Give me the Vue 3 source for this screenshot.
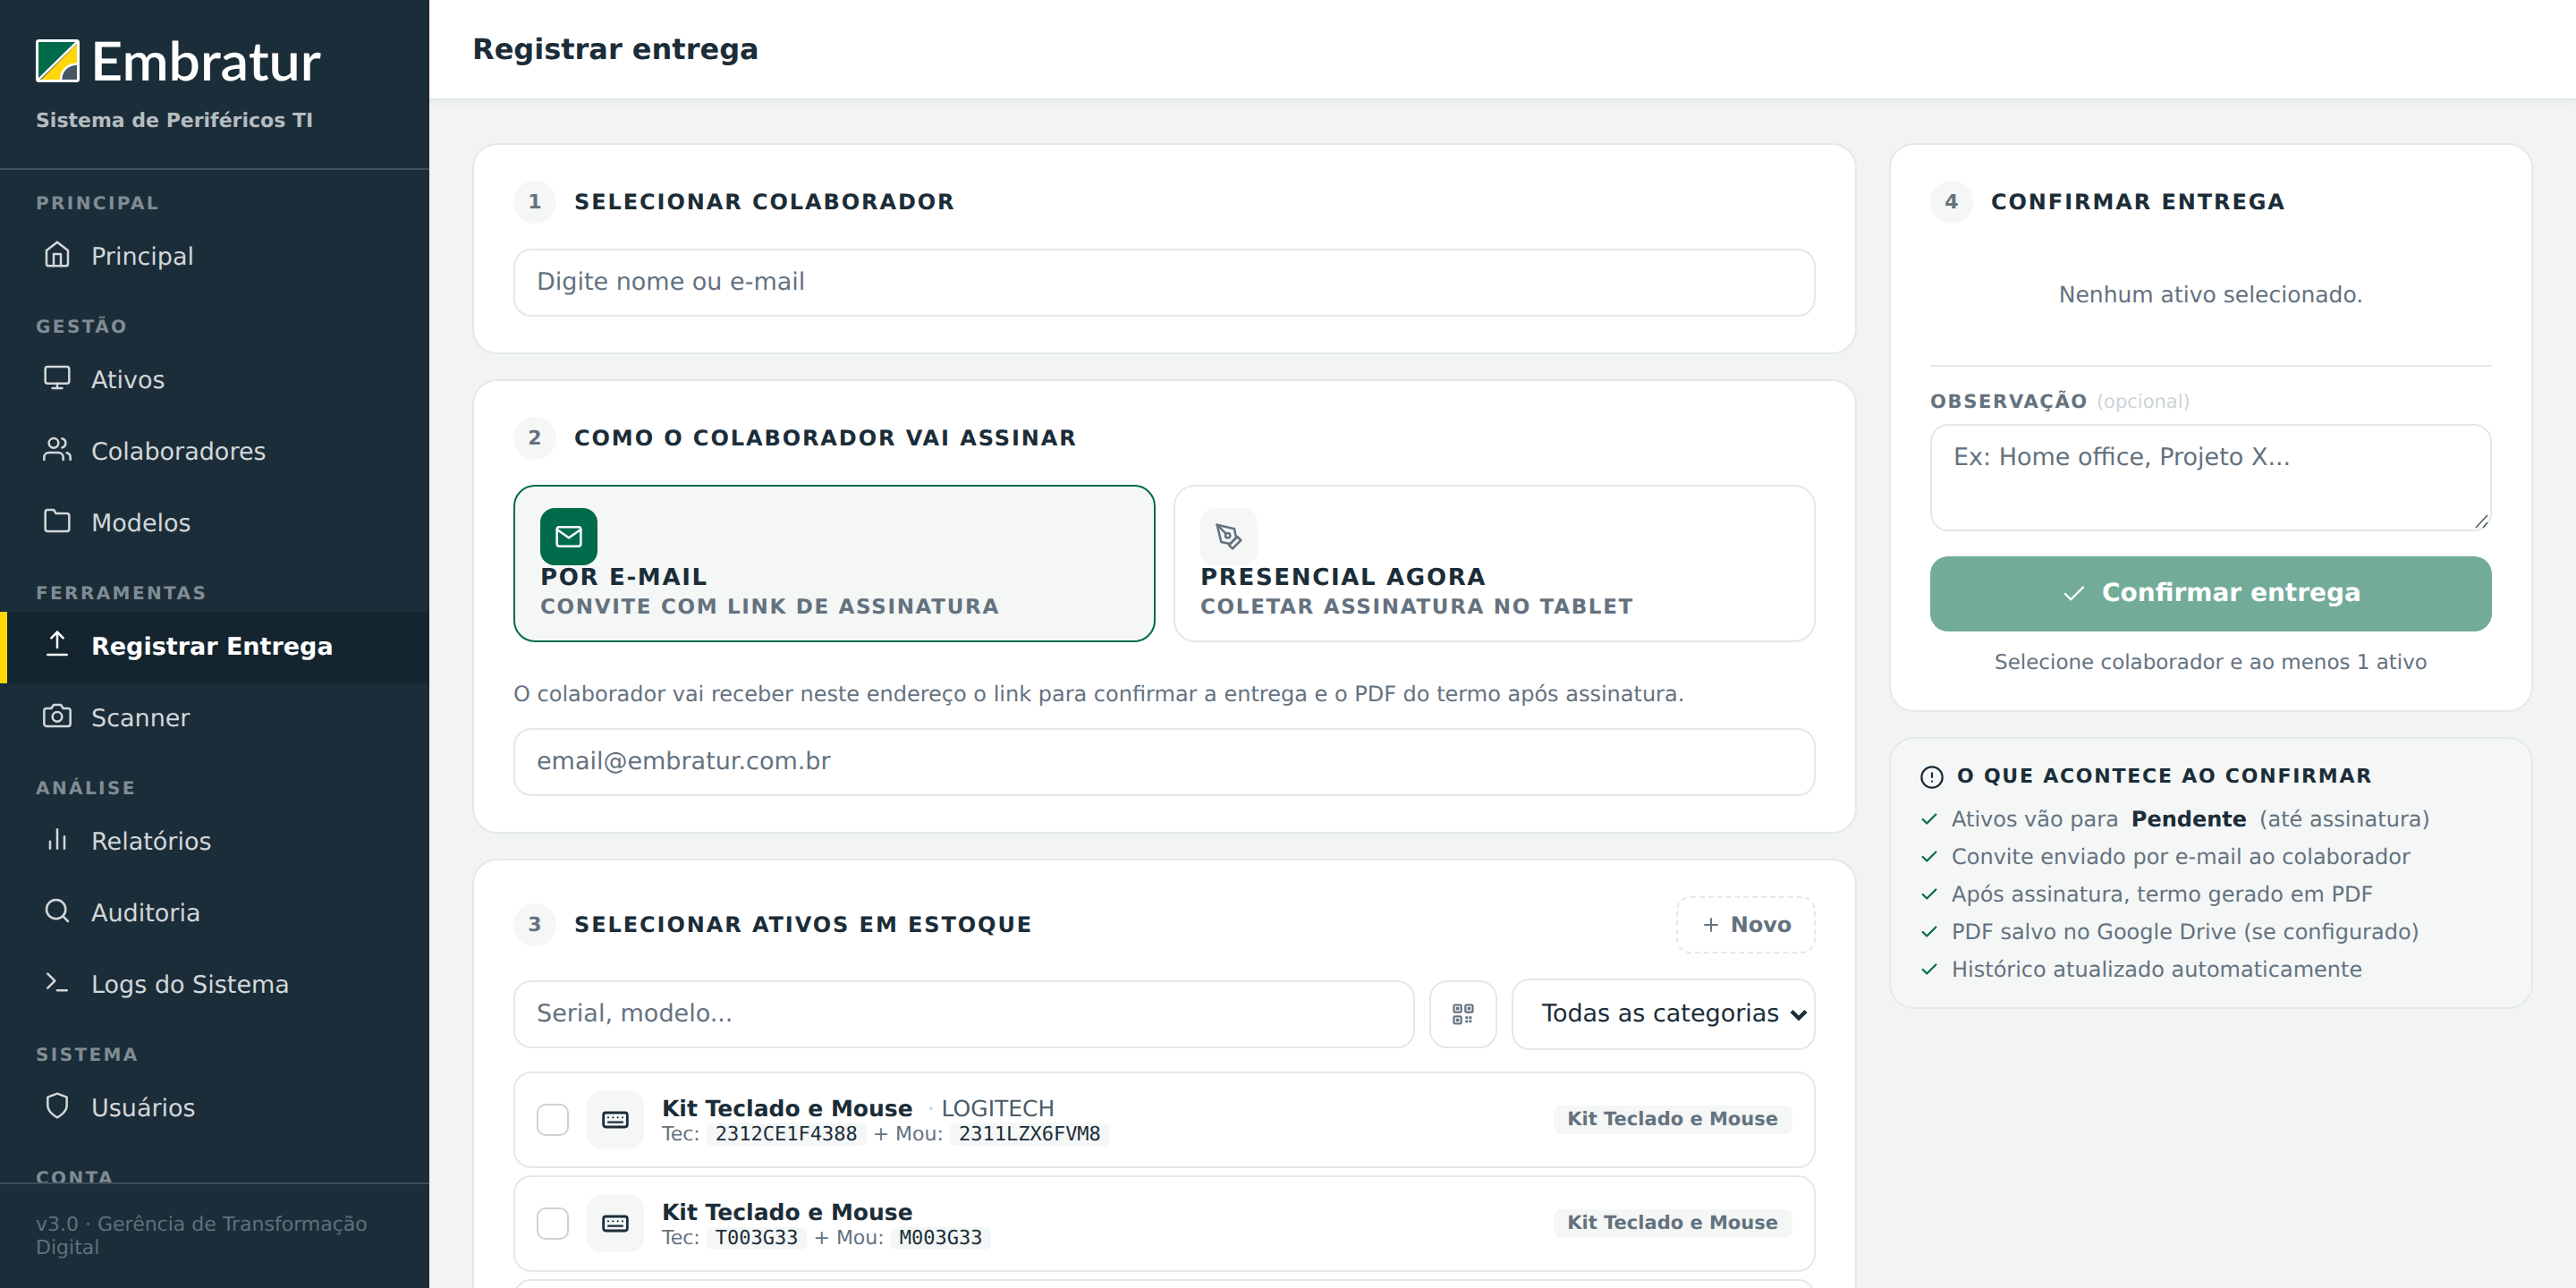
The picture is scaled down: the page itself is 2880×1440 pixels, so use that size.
<!-- App.vue -->
<template>
    <div class="layout">
        <aside class="sidebar">
            <div class="brand">
                <svg class="brand-logo" width="340" height="56" viewBox="0 0 340 56">
                    <rect x="1.5" y="1.5" width="46" height="45" rx="2" fill="#1b2d38" />
                    <path d="M3 3h42L3 43z" fill="#006b4b" />
                    <path d="M46 5v22c-11 1-17 8-18 19H5z" fill="#ffd60a" />
                    <path d="M46 28v18H28.500c0-11 7-17 17.500-18z" fill="#455764" />
                    <path d="M3 45L46 3M28 46c0-11 7-18 18-18.500" fill="none" stroke="#fff" stroke-width="2.500" />
                    <rect x="1.500" y="1.500" width="46" height="45" rx="2" fill="none" stroke="#fff" stroke-width="3" />
                    <text class="brand-name" x="61" y="46" textLength="258" lengthAdjust="spacingAndGlyphs">Embratur</text>
                </svg>
                <div class="brand-sub">Sistema de Periféricos TI</div>
            </div>
            <nav class="nav">
                <template v-for="section in sections" :key="section.label">
                    <div class="nav-label">{{ section.label }}</div>
                    <a v-for="item in section.items" :key="item.label" class="nav-item" :class="{ active: item.active }">
                        <span class="nav-icon">
                            <svg class="icon" width="32" height="32" viewBox="0 0 24 24"><path v-for="d in icons[item.icon]" :key="d" :d="d" /></svg>
                        </span>
                        <span>{{ item.label }}</span>
                    </a>
                </template>
            </nav>
            <div class="sidebar-footer">v3.0 · Gerência de Transformação Digital</div>
        </aside>

        <div class="main">
            <header class="topbar">
                <h1>Registrar entrega</h1>
            </header>
            <div class="content">
                <div class="col">
                    <!-- Passo 1 -->
                    <section class="card">
                        <div class="card-head">
                            <span class="step">1</span>
                            <h2>SELECIONAR COLABORADOR</h2>
                        </div>
                        <input v-model="colaborador" class="field" type="text" placeholder="Digite nome ou e-mail">
                    </section>

                    <!-- Passo 2 -->
                    <section class="card">
                        <div class="card-head">
                            <span class="step">2</span>
                            <h2>COMO O COLABORADOR VAI ASSINAR</h2>
                        </div>
                        <div class="modes">
                            <div
                                v-for="m in modes"
                                :key="m.id"
                                class="mode"
                                :class="{ selected: mode === m.id }"
                                @click="mode = m.id"
                            >
                                <span class="mode-icon">
                                    <svg class="icon" width="32" height="32" viewBox="0 0 24 24"><path v-for="d in icons[m.icon]" :key="d" :d="d" /></svg>
                                </span>
                                <div class="mode-title">{{ m.title }}</div>
                                <div class="mode-sub">{{ m.sub }}</div>
                            </div>
                        </div>
                        <p class="mode-help">O colaborador vai receber neste endereço o link para confirmar a entrega e o PDF do termo após assinatura.</p>
                        <input v-model="email" class="field" type="email" placeholder="email@embratur.com.br">
                    </section>

                    <!-- Passo 3 -->
                    <section class="card">
                        <div class="card-head">
                            <span class="step">3</span>
                            <h2>SELECIONAR ATIVOS EM ESTOQUE</h2>
                            <button class="btn-new" type="button">
                                <svg class="icon" width="24" height="24" viewBox="0 0 24 24"><path d="M12 5v14M5 12h14" /></svg>
                                Novo
                            </button>
                        </div>
                        <div class="filters">
                            <input v-model="busca" class="field" type="text" placeholder="Serial, modelo...">
                            <button class="btn-qr" type="button">
                                <svg class="icon" width="28" height="28" viewBox="0 0 24 24">
                                    <rect x="3" y="3" width="7" height="7" rx="1" />
                                    <rect x="14" y="3" width="7" height="7" rx="1" />
                                    <rect x="3" y="14" width="7" height="7" rx="1" />
                                    <path class="solid" d="M5 5h3v3H5zM16 5h3v3h-3zM5 16h3v3H5zM14 14h2.500v2.500H14zM17.500 14H20v2.500h-2.500zM14 17.500h2.500V20H14zM17.500 17.500H20V20h-2.500z" />
                                </svg>
                            </button>
                            <div class="select">
                                <span>Todas as categorias</span>
                                <svg width="20" height="14" viewBox="0 0 20 14"><path d="M2 2.500l8 8 8-8" /></svg>
                            </div>
                        </div>
                        <div class="assets">
                            <div v-for="(a, i) in ativos" :key="i" class="asset">
                                <span class="check-box"></span>
                                <span class="asset-icon">
                                    <svg class="icon keyboard" width="32" height="32" viewBox="0 0 24 24">
                                        <rect x="2" y="6" width="20" height="12" rx="2" />
                                        <path d="M6 10h.01M10 10h.01M14 10h.01M18 10h.01M6 14h12" />
                                    </svg>
                                </span>
                                <div class="asset-info">
                                    <div class="asset-name">
                                        <strong>{{ a.nome }}</strong>
                                        <span v-if="a.marca" class="asset-brand"><i>·</i> {{ a.marca }}</span>
                                    </div>
                                    <div class="asset-serial">Tec: <code>{{ a.tec }}</code> + Mou: <code>{{ a.mou }}</code></div>
                                </div>
                                <span class="badge">{{ a.nome }}</span>
                            </div>
                        </div>
                    </section>
                </div>

                <div class="col">
                    <!-- Passo 4 -->
                    <section class="card">
                        <div class="card-head">
                            <span class="step">4</span>
                            <h2>CONFIRMAR ENTREGA</h2>
                        </div>
                        <div class="empty">Nenhum ativo selecionado.</div>
                        <div class="obs-label">OBSERVAÇÃO <span>(opcional)</span></div>
                        <div class="obs">
                            <textarea v-model="observacao" class="field" placeholder="Ex: Home office, Projeto X..."></textarea>
                            <svg class="grip" width="16" height="16" viewBox="0 0 16 16"><path d="M1 15L14 1M9 15l5-6" /></svg>
                        </div>
                        <button class="btn-confirm" type="button">
                            <svg class="icon" width="30" height="30" viewBox="0 0 24 24"><path d="M20 6L9 17l-5-5" /></svg>
                            Confirmar entrega
                        </button>
                        <div class="hint">Selecione colaborador e ao menos 1 ativo</div>
                    </section>

                    <section class="info">
                        <div class="info-title">
                            <svg class="icon" width="28" height="28" viewBox="0 0 24 24">
                                <circle cx="12" cy="12" r="10" />
                                <path d="M12 8v4M12 16h.01" />
                            </svg>
                            O QUE ACONTECE AO CONFIRMAR
                        </div>
                        <div v-for="(parts, i) in passos" :key="i" class="info-row">
                            <svg class="icon" width="22" height="22" viewBox="0 0 24 24"><path d="M20 6L9 17l-5-5" /></svg>
                            <component :is="j === 1 ? 'strong' : 'span'" v-for="(p, j) in parts" :key="j">{{ p }}</component>
                        </div>
                    </section>
                </div>
            </div>
        </div>
    </div>
</template>

<script setup>
import { ref } from 'vue';

// Campos do formulário
const colaborador = ref('');
const email = ref('');
const busca = ref('');
const observacao = ref('');
const mode = ref('email');

// Ícones (traços em viewBox 24x24)
const icons = {
    home: ['M3 9l9-7 9 7v11a2 2 0 0 1-2 2H5a2 2 0 0 1-2-2z', 'M9 22V12h6v10'],
    monitor: ['M4 3h16a2 2 0 0 1 2 2v10a2 2 0 0 1-2 2H4a2 2 0 0 1-2-2V5a2 2 0 0 1 2-2z', 'M8 21h8', 'M12 17v4'],
    users: ['M17 21v-2a4 4 0 0 0-4-4H5a4 4 0 0 0-4 4v2', 'M13 7a4 4 0 1 1-8 0 4 4 0 0 1 8 0z', 'M23 21v-2a4 4 0 0 0-3-3.870', 'M16 3.130a4 4 0 0 1 0 7.750'],
    folder: ['M22 19a2 2 0 0 1-2 2H4a2 2 0 0 1-2-2V5a2 2 0 0 1 2-2h5l2 3h9a2 2 0 0 1 2 2z'],
    upload: ['M12 15V2', 'M7 7l5-5 5 5', 'M4 21h16'],
    camera: ['M23 19a2 2 0 0 1-2 2H3a2 2 0 0 1-2-2V8a2 2 0 0 1 2-2h4l2-3h6l2 3h4a2 2 0 0 1 2 2z', 'M16 13a4 4 0 1 1-8 0 4 4 0 0 1 8 0z'],
    chart: ['M18 20V10', 'M12 20V4', 'M6 20v-6'],
    search: ['M19 11a8 8 0 1 1-16 0 8 8 0 0 1 16 0z', 'M21 21l-4.350-4.350'],
    terminal: ['M4 17l6-6-6-6', 'M12 19h8'],
    shield: ['M12 22s8-4 8-10V5l-8-3-8 3v7c0 6 8 10 8 10z'],
    mail: ['M4 4h16a2 2 0 0 1 2 2v12a2 2 0 0 1-2 2H4a2 2 0 0 1-2-2V6a2 2 0 0 1 2-2z', 'M22 6l-10 7L2 6'],
    pen: ['M12 19l7-7 3 3-7 7-3-3z', 'M18 13l-1.500-7.500L2 2l3.500 14.500L13 18l5-5z', 'M2 2l7.586 7.586', 'M13 11a2 2 0 1 1-4 0 2 2 0 0 1 4 0z']
};

// Menu lateral
const sections = [
    { label: 'PRINCIPAL', items: [{ label: 'Principal', icon: 'home' }] },
    {
        label: 'GESTÃO',
        items: [
            { label: 'Ativos', icon: 'monitor' },
            { label: 'Colaboradores', icon: 'users' },
            { label: 'Modelos', icon: 'folder' }
        ]
    },
    {
        label: 'FERRAMENTAS',
        items: [
            { label: 'Registrar Entrega', icon: 'upload', active: true },
            { label: 'Scanner', icon: 'camera' }
        ]
    },
    {
        label: 'ANÁLISE',
        items: [
            { label: 'Relatórios', icon: 'chart' },
            { label: 'Auditoria', icon: 'search' },
            { label: 'Logs do Sistema', icon: 'terminal' }
        ]
    },
    { label: 'SISTEMA', items: [{ label: 'Usuários', icon: 'shield' }] },
    { label: 'CONTA', items: [] }
];

// Formas de assinatura
const modes = [
    { id: 'email', icon: 'mail', title: 'POR E-MAIL', sub: 'CONVITE COM LINK DE ASSINATURA' },
    { id: 'presencial', icon: 'pen', title: 'PRESENCIAL AGORA', sub: 'COLETAR ASSINATURA NO TABLET' }
];

// Ativos em estoque
const ativos = [
    { nome: 'Kit Teclado e Mouse', marca: 'LOGITECH', tec: '2312CE1F4388', mou: '2311LZX6FVM8' },
    { nome: 'Kit Teclado e Mouse', tec: 'T003G33', mou: 'M003G33' },
    { nome: 'Kit Teclado e Mouse', tec: 'T003G34', mou: 'M003G34' }
];

// Cada passo é uma lista de trechos; o segundo trecho sai em destaque
const passos = [
    ['Ativos vão para', 'Pendente', '(até assinatura)'],
    ['Convite enviado por e-mail ao colaborador'],
    ['Após assinatura, termo gerado em PDF'],
    ['PDF salvo no Google Drive (se configurado)'],
    ['Histórico atualizado automaticamente']
];
</script>

<style>
body {
    margin: 0;
    background: #f1f4f3;
}
</style>

<style scoped>
* {
    box-sizing: border-box;
}

.layout {
    display: flex;
    height: 1440px;
    overflow: hidden;
    color: #1b2d38;
    font-family: "DejaVu Sans", sans-serif;
    font-size: 27px;
    text-rendering: geometricPrecision;
}

.icon {
    flex: none;
    fill: none;
    stroke: currentColor;
    stroke-width: 1.9;
    stroke-linecap: round;
    stroke-linejoin: round;
}

/* Menu lateral */
.sidebar {
    display: flex;
    flex-direction: column;
    flex: none;
    width: 480px;
    background: #1b2d38;
}

.brand {
    flex: none;
    height: 190px;
    padding: 44px 40px 0;
    border-bottom: 2px solid #3d4e5b;
}

.brand-logo {
    display: block;
    overflow: visible;
}

.brand-name {
    fill: #fff;
    font-family: Lato, sans-serif;
    font-size: 60px;
    font-weight: 600;
}

.brand-sub {
    margin-top: 22px;
    color: #b5bcc0;
    font-size: 22px;
    font-weight: 700;
    line-height: 28px;
}

.nav {
    flex: 1;
    min-height: 0;
    overflow: hidden;
}

.nav-label {
    height: 58px;
    padding: 26px 40px 0;
    color: #808c95;
    font-size: 20px;
    font-weight: 700;
    letter-spacing: 2.4px;
    line-height: 22px;
}

.nav-item {
    display: flex;
    align-items: center;
    gap: 14px;
    height: 80px;
    padding-left: 32px;
    border-left: 8px solid transparent;
    color: #d2d7d9;
    line-height: 32px;
}

.nav-item.active {
    border-left-color: #ffd60a;
    background: #15252f;
    color: #fff;
    font-weight: 700;
}

.nav-icon {
    display: flex;
    justify-content: center;
    width: 48px;
    padding-bottom: 8px;
}

.sidebar-footer {
    flex: none;
    height: 118px;
    padding: 33px 40px 0;
    border-top: 2px solid #3d4e5b;
    color: #60707d;
    font-size: 22px;
    line-height: 26px;
}

/* Conteúdo */
.main {
    flex: 1;
    min-width: 0;
}

.topbar {
    display: flex;
    align-items: center;
    height: 112px;
    padding: 0 48px;
    border-bottom: 2px solid #e4e9e8;
    background: #fff;
    box-shadow: 0 2px 8px rgba(27, 45, 56, 0.06);
}

h1 {
    margin: 0;
    font-size: 32px;
    line-height: 40px;
}

.content {
    display: grid;
    grid-template-columns: 1548px 720px;
    gap: 36px;
    padding: 48px;
}

.col {
    display: flex;
    flex-direction: column;
    gap: 28px;
}

.card {
    padding: 40px 44px;
    border: 2px solid #e4e9e8;
    border-radius: 28px;
    background: #fff;
}

.card-head {
    display: flex;
    align-items: center;
    gap: 20px;
    margin-bottom: 28px;
}

.step {
    display: flex;
    align-items: center;
    justify-content: center;
    width: 48px;
    height: 48px;
    border-radius: 50%;
    background: #f4f7f6;
    color: #64727f;
    font-size: 22px;
    font-weight: 700;
}

h2 {
    margin: 0;
    font-size: 24px;
    letter-spacing: 1.92px;
    line-height: 30px;
}

.field {
    display: block;
    width: 100%;
    height: 76px;
    padding: 0 24px 2px;
    border: 2px solid #e4e9e8;
    border-radius: 20px;
    outline: none;
    background: #fff;
    color: #1b2d38;
    font-family: inherit;
    font-size: 27px;
    text-rendering: inherit;
}

.field::placeholder {
    color: #64727f;
    opacity: 1;
}

/* Forma de assinatura */
.modes {
    display: grid;
    grid-template-columns: 1fr 1fr;
    gap: 20px;
}

.mode {
    height: 176px;
    padding: 24px 28px;
    border: 2px solid #e4e9e8;
    border-radius: 24px;
    font-weight: 700;
    letter-spacing: 1.68px;
}

.mode.selected {
    border-color: #006b4b;
    background: #f4f7f6;
}

.mode-icon {
    display: flex;
    align-items: center;
    justify-content: center;
    width: 64px;
    height: 64px;
    border-radius: 16px;
    background: #f4f7f6;
    color: #64727f;
}

.mode.selected .mode-icon {
    background: #006b4b;
    color: #fff;
}

.mode-title {
    font-size: 26px;
    line-height: 29px;
}

.mode-sub {
    margin-top: 3px;
    color: #64727f;
    font-size: 23px;
    line-height: 30px;
}

.mode-help {
    margin: 43px 0 23px;
    color: #64727f;
    font-size: 24px;
    line-height: 30px;
}

/* Lista de ativos */
.btn-new {
    display: flex;
    align-items: center;
    justify-content: center;
    gap: 10px;
    width: 156px;
    height: 64px;
    margin-left: auto;
    padding: 0;
    border: 2px dashed #e4e9e8;
    border-radius: 16px;
    background: #fff;
    color: #64727f;
    font-family: inherit;
    font-size: 24px;
    font-weight: 700;
    text-rendering: inherit;
}

.filters {
    display: grid;
    grid-template-columns: 1fr 76px 340px;
    align-items: center;
    gap: 16px;
    margin-bottom: 24px;
}

.btn-qr {
    display: flex;
    align-items: center;
    justify-content: center;
    height: 76px;
    padding: 0;
    border: 2px solid #e4e9e8;
    border-radius: 20px;
    background: #fff;
    color: #64727f;
}

.solid {
    fill: currentColor;
    stroke: none;
}

.select {
    display: flex;
    align-items: center;
    justify-content: space-between;
    height: 80px;
    padding: 0 7px 2px 32px;
    border: 2px solid #e4e9e8;
    border-radius: 20px;
    white-space: nowrap;
}

.select svg {
    margin-top: 3px;
    fill: none;
    stroke: #1b2d38;
    stroke-width: 4.4;
}

.assets {
    display: flex;
    flex-direction: column;
    gap: 8px;
}

.asset {
    display: flex;
    align-items: center;
    gap: 20px;
    height: 108px;
    padding: 0 24px;
    border: 2px solid #e4e9e8;
    border-radius: 20px;
}

.check-box {
    width: 36px;
    height: 36px;
    border: 2px solid #ccd3d6;
    border-radius: 10px;
}

.asset-icon {
    display: flex;
    align-items: center;
    justify-content: center;
    width: 64px;
    height: 64px;
    border-radius: 16px;
    background: #f4f7f6;
}

.keyboard rect {
    stroke-width: 2.1;
}

.keyboard path {
    stroke-width: 1.6;
}

.asset-info {
    flex: 1;
    padding-top: 4px;
}

.asset-name {
    display: flex;
    align-items: baseline;
    gap: 16px;
    font-size: 25px;
    line-height: 30px;
}

.asset-brand {
    color: #4b5c68;
}

.asset-brand i {
    color: #c8d0d3;
    font-style: normal;
}

.asset-serial {
    color: #64727f;
    font-size: 22px;
    line-height: 28px;
}

code {
    padding: 0 10px;
    border-radius: 6px;
    background: #f4f7f6;
    color: #1b2d38;
    font-family: "DejaVu Sans Mono", monospace;
    font-size: 22px;
}

.badge {
    height: 32px;
    padding: 0 16px 0 15px;
    border-radius: 8px;
    background: #f4f7f6;
    color: #64727f;
    font-size: 21px;
    font-weight: 700;
    line-height: 30px;
}

/* Confirmação */
.empty {
    margin-bottom: 26px;
    padding: 64px 0 62px;
    border-bottom: 2px solid #e4e9e8;
    color: #64727f;
    font-size: 25px;
    line-height: 32px;
    text-align: center;
}

.card-head + .empty {
    margin-top: -28px;
}

.obs-label {
    margin-bottom: 12px;
    color: #64727f;
    font-size: 21px;
    font-weight: 700;
    letter-spacing: 1.68px;
    line-height: 26px;
}

.obs-label span {
    color: #ccd3d6;
    font-weight: 400;
    letter-spacing: 0;
}

.obs {
    position: relative;
    margin-bottom: 28px;
}

.obs .field {
    height: 120px;
    padding: 20px 24px;
    line-height: 32px;
    resize: none;
}

.grip {
    position: absolute;
    right: 3px;
    bottom: 3px;
    fill: none;
    stroke: #4b5c68;
    stroke-width: 1.6;
}

.btn-confirm {
    display: flex;
    align-items: center;
    justify-content: center;
    gap: 16px;
    width: 100%;
    height: 84px;
    padding: 0 0 4px;
    border: 0;
    border-radius: 20px;
    background: #73ab9a;
    color: #fff;
    font-family: inherit;
    font-size: 28px;
    font-weight: 700;
    text-rendering: inherit;
}

.btn-confirm .icon {
    margin-top: 4px;
}

.hint {
    margin: 21px 0 -1px;
    color: #64727f;
    font-size: 23px;
    line-height: 28px;
    text-align: center;
}

.info {
    height: 304px;
    padding: 29px 32px 0;
    border: 2px solid #e4e9e8;
    border-radius: 28px;
    background: #f4f7f6;
}

.info-title {
    display: flex;
    align-items: center;
    gap: 14px;
    margin-bottom: 12px;
    font-size: 22px;
    font-weight: 700;
    letter-spacing: 1.76px;
    line-height: 28px;
}

.info-row {
    display: flex;
    align-items: center;
    gap: 14px;
    height: 42px;
    color: #64727f;
    font-size: 24px;
}

.info-row .icon {
    color: #006b4b;
    stroke-width: 2.4;
}

.info-row strong {
    color: #1b2d38;
}
</style>
